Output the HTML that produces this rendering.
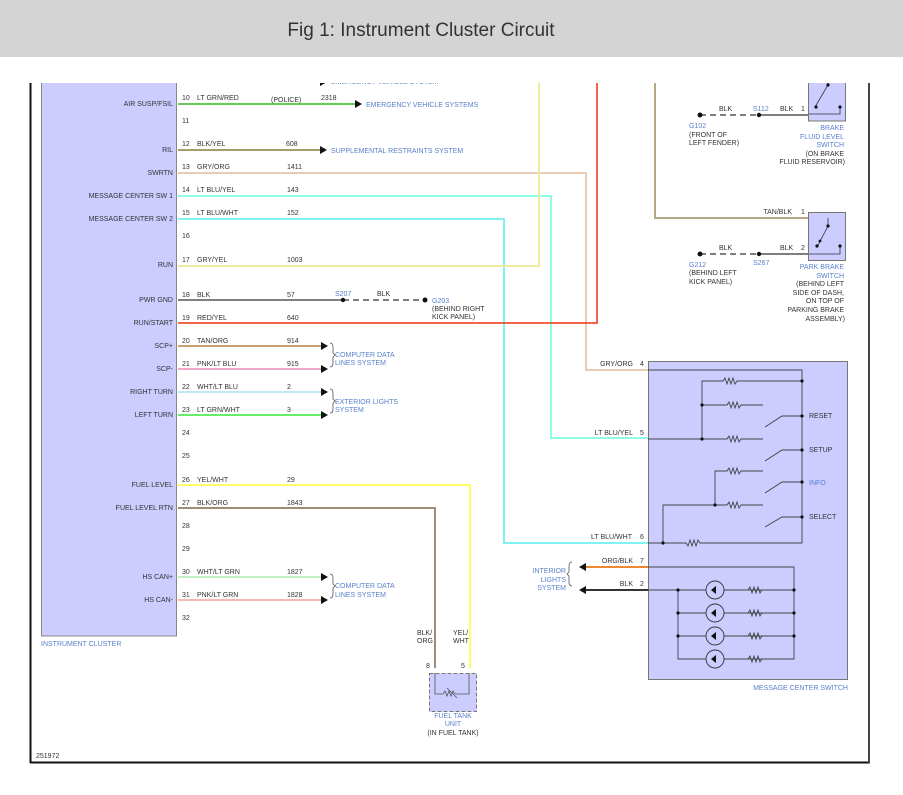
<!DOCTYPE html>
<html><head><meta charset="utf-8"><style>
body{margin:0;background:#fff;width:903px;height:795px;overflow:hidden}
svg{display:block}
text{font-family:"Liberation Sans",sans-serif;font-size:7px;fill:#333}
.b{fill:#5a7fcc}
</style></head><body>
<svg width="903" height="795" viewBox="0 0 903 795">
<line x1="30.5" y1="83" x2="30.5" y2="763" stroke="#111" stroke-width="2"/>
<line x1="30" y1="762.5" x2="870" y2="762.5" stroke="#111" stroke-width="2"/>
<line x1="869" y1="83" x2="869" y2="763" stroke="#444" stroke-width="2"/>
<rect x="41.5" y="60" width="135" height="576" fill="#ccccff" stroke="#888"/>
<text class="b" x="41" y="646">INSTRUMENT CLUSTER</text>
<text x="36" y="758">251972</text>
<g fill="none" stroke-width="1.5">
<line x1="178" y1="104" x2="356" y2="104" stroke="#66cc55" stroke-width="2"/>
<line x1="178" y1="150" x2="320" y2="150" stroke="#a39e6a" stroke-width="2"/>
<polyline points="178,173 586,173 586,370 648,370" stroke="#e8cbb4" stroke-width="2"/>
<polyline points="178,196 551,196 551,438 648,438" stroke="#66ffdd" stroke-width="1.5"/>
<polyline points="178,219 504,219 504,543 648,543" stroke="#55eeee" stroke-width="1.5"/>
<polyline points="178,266 539,266 539,70" stroke="#eeeaa0" stroke-width="2"/>
<line x1="178" y1="300" x2="343" y2="300" stroke="#555"/>
<line x1="343" y1="300" x2="425" y2="300" stroke="#555" stroke-dasharray="6,4"/>
<polyline points="178,323 597,323 597,70" stroke="#ee3311" stroke-width="1.5"/>
<line x1="178" y1="346" x2="322" y2="346" stroke="#c9a070" stroke-width="2"/>
<line x1="178" y1="369" x2="322" y2="369" stroke="#f0a8c8" stroke-width="2"/>
<line x1="178" y1="392" x2="322" y2="392" stroke="#c0e8ee" stroke-width="2"/>
<line x1="178" y1="415" x2="322" y2="415" stroke="#66ee66" stroke-width="2"/>
<polyline points="178,485 470,485 470,668" stroke="#ffff33" stroke-width="1.5"/>
<polyline points="178,508 435,508 435,668" stroke="#a08a78" stroke-width="2"/>
<line x1="178" y1="577" x2="322" y2="577" stroke="#aaeeaa" stroke-width="1.5"/>
<line x1="178" y1="600" x2="322" y2="600" stroke="#f8b8b8" stroke-width="2"/>
<polyline points="655,70 655,218 808,218" stroke="#b8a888" stroke-width="2"/>
<line x1="700" y1="115" x2="759" y2="115" stroke="#555" stroke-dasharray="6,4"/>
<line x1="759" y1="115" x2="808" y2="115" stroke="#555"/>
<line x1="700" y1="254" x2="759" y2="254" stroke="#555" stroke-dasharray="6,4"/>
<line x1="759" y1="254" x2="808" y2="254" stroke="#555"/>
<line x1="585" y1="567" x2="648" y2="567" stroke="#ee8833" stroke-width="2"/>
<line x1="585" y1="590" x2="648" y2="590" stroke="#333" stroke-width="2"/>
</g>
<g fill="#111">
<polygon points="320,78 327,82 320,86"/>
<polygon points="355,100 362,104 355,108"/><polygon points="320,146 327,150 320,154"/>
<polygon points="321,342 328,346 321,350"/><polygon points="321,365 328,369 321,373"/>
<polygon points="321,388 328,392 321,396"/><polygon points="321,411 328,415 321,419"/>
<polygon points="321,573 328,577 321,581"/><polygon points="321,596 328,600 321,604"/>
<polygon points="586,563 579,567 586,571"/><polygon points="586,586 579,590 586,594"/>
<circle cx="343" cy="300" r="2.2"/><circle cx="425" cy="300" r="2.5"/>
<circle cx="759" cy="115" r="2.2"/><circle cx="700" cy="115" r="2.5"/>
<circle cx="759" cy="254" r="2.2"/><circle cx="700" cy="254" r="2.5"/>
</g>
<text class="b" x="331" y="84">EMERGENCY VEHICLE SYSTEM</text>
<g fill="none" stroke="#555" stroke-width="0.8">
<path d="M330,343 q3,0 3,4 v6 l2,2 l-2,2 v6 q0,4 -3,4"/>
<path d="M330,389 q3,0 3,4 v6 l2,2 l-2,2 v6 q0,4 -3,4"/>
<path d="M330,574 q3,0 3,4 v6 l2,2 l-2,2 v6 q0,4 -3,4"/>
<path d="M572,562 q-3,0 -3,4 v6 l-2,2 l2,2 v6 q0,4 3,4"/>
</g>
<g text-anchor="end">
<text x="173" y="106">AIR SUSP/FSIL</text><text x="173" y="152">RIL</text><text x="173" y="175">SWRTN</text>
<text x="173" y="198">MESSAGE CENTER SW 1</text><text x="173" y="221">MESSAGE CENTER SW 2</text>
<text x="173" y="267">RUN</text><text x="173" y="302">PWR GND</text><text x="173" y="325">RUN/START</text>
<text x="173" y="348">SCP+</text><text x="173" y="371">SCP-</text><text x="173" y="394">RIGHT TURN</text>
<text x="173" y="417">LEFT TURN</text><text x="173" y="487">FUEL LEVEL</text><text x="173" y="510">FUEL LEVEL RTN</text>
<text x="173" y="579">HS CAN+</text><text x="173" y="602">HS CAN-</text>
</g>
<g>
<text x="182" y="100">10</text><text x="182" y="123">11</text><text x="182" y="146">12</text><text x="182" y="169">13</text>
<text x="182" y="192">14</text><text x="182" y="215">15</text><text x="182" y="238">16</text><text x="182" y="262">17</text>
<text x="182" y="297">18</text><text x="182" y="320">19</text><text x="182" y="343">20</text><text x="182" y="366">21</text>
<text x="182" y="389">22</text><text x="182" y="412">23</text><text x="182" y="435">24</text><text x="182" y="458">25</text>
<text x="182" y="482">26</text><text x="182" y="505">27</text><text x="182" y="528">28</text><text x="182" y="551">29</text>
<text x="182" y="574">30</text><text x="182" y="597">31</text><text x="182" y="620">32</text>
<text x="197" y="100">LT GRN/RED</text><text x="197" y="146">BLK/YEL</text><text x="197" y="169">GRY/ORG</text>
<text x="197" y="192">LT BLU/YEL</text><text x="197" y="215">LT BLU/WHT</text><text x="197" y="262">GRY/YEL</text>
<text x="197" y="297">BLK</text><text x="197" y="320">RED/YEL</text><text x="197" y="343">TAN/ORG</text>
<text x="197" y="366">PNK/LT BLU</text><text x="197" y="389">WHT/LT BLU</text><text x="197" y="412">LT GRN/WHT</text>
<text x="197" y="482">YEL/WHT</text><text x="197" y="505">BLK/ORG</text><text x="197" y="574">WHT/LT GRN</text><text x="197" y="597">PNK/LT GRN</text>
<text x="271" y="102">(POLICE)</text><text x="321" y="100">2318</text><text x="286" y="146">608</text><text x="287" y="169">1411</text>
<text x="287" y="192">143</text><text x="287" y="215">152</text><text x="287" y="262">1003</text><text x="287" y="297">57</text>
<text x="287" y="320">640</text><text x="287" y="343">914</text><text x="287" y="366">915</text><text x="287" y="389">2</text>
<text x="287" y="412">3</text><text x="287" y="482">29</text><text x="287" y="505">1843</text><text x="287" y="574">1827</text><text x="287" y="597">1828</text>
<text x="335" y="296" class="b">S207</text><text x="377" y="296">BLK</text>
<text class="b" x="432" y="303">G203</text><text x="432" y="311">(BEHIND RIGHT</text><text x="432" y="319">KICK PANEL)</text>
<text class="b" x="366" y="107">EMERGENCY VEHICLE SYSTEMS</text>
<text class="b" x="331" y="153">SUPPLEMENTAL RESTRAINTS SYSTEM</text>
<text class="b" x="335" y="357">COMPUTER DATA</text><text class="b" x="335" y="365">LINES SYSTEM</text>
<text class="b" x="335" y="404">EXTERIOR LIGHTS</text><text class="b" x="335" y="412">SYSTEM</text>
<text class="b" x="335" y="588">COMPUTER DATA</text><text class="b" x="335" y="597">LINES SYSTEM</text>
</g>
<rect x="429.5" y="673.5" width="47" height="38" fill="#ccccff" stroke="#777" stroke-dasharray="4,2"/>
<path d="M435,673 v21 h8 l2,-3 l2,5 l2,-5 l2,5 l2,-5 l2,3 h14 v-21 M447,688 l10,10" fill="none" stroke="#555" stroke-width="0.8"/>
<text x="417" y="635">BLK/</text><text x="417" y="643">ORG</text><text x="453" y="635">YEL/</text><text x="453" y="643">WHT</text>
<text x="426" y="668">8</text><text x="461" y="668">5</text>
<g text-anchor="middle"><text class="b" x="453" y="718">FUEL TANK</text><text class="b" x="453" y="726">UNIT</text><text x="453" y="735">(IN FUEL TANK)</text></g>
<rect x="808.5" y="60" width="37" height="61" fill="#ccccff" stroke="#777"/>
<rect x="808.5" y="212.5" width="37" height="48" fill="#ccccff" stroke="#777"/>
<g fill="none" stroke="#333" stroke-width="0.8">
<path d="M815,107 L828,85 V70 M840,107 v7 h-31"/>
<path d="M817,247 L828,226 v-8 M840,246 v8 h-31"/>
</g>
<g fill="#111"><circle cx="816" cy="107" r="1.6"/><circle cx="840" cy="107" r="1.6"/><circle cx="828" cy="85" r="1.6"/><circle cx="828" cy="226" r="1.6"/><circle cx="817" cy="246" r="1.6"/><circle cx="840" cy="246" r="1.6"/><circle cx="820" cy="241" r="1.4"/></g>
<text x="719" y="111">BLK</text><text class="b" x="753" y="111">S112</text><text x="780" y="111">BLK</text><text x="801" y="111">1</text>
<text class="b" x="689" y="128">G102</text><text x="689" y="137">(FRONT OF</text><text x="689" y="145">LEFT FENDER)</text>
<g text-anchor="end"><text class="b" x="844" y="130">BRAKE</text><text class="b" x="844" y="139">FLUID LEVEL</text><text class="b" x="844" y="147">SWITCH</text><text x="844" y="156">(ON BRAKE</text><text x="845" y="164">FLUID RESERVOIR)</text>
<text x="792" y="214">TAN/BLK</text>
<text class="b" x="844" y="269">PARK BRAKE</text><text class="b" x="844" y="278">SWITCH</text><text x="844" y="286">(BEHIND LEFT</text><text x="844" y="295">SIDE OF DASH,</text><text x="844" y="303">ON TOP OF</text><text x="844" y="312">PARKING BRAKE</text><text x="845" y="321">ASSEMBLY)</text></g>
<text x="801" y="214">1</text><text x="719" y="250">BLK</text><text x="780" y="250">BLK</text><text x="801" y="250">2</text>
<text class="b" x="753" y="265">S267</text><text class="b" x="689" y="267">G212</text><text x="689" y="275">(BEHIND LEFT</text><text x="689" y="284">KICK PANEL)</text>
<rect x="648.5" y="361.5" width="199" height="318" fill="#ccccff" stroke="#777"/>
<g fill="none" stroke="#444" stroke-width="0.9">
<path d="M648,370 H802 V543 H700 l-2,-3 l-2,6 l-2,-6 l-2,6 l-2,-6 l-2,6 l-2,-3 H648"/>
<path d="M702,439 V381 H723 l2,-3 l2,6 l2,-6 l2,6 l2,-6 l2,6 l2,-3 H802"/>
<path d="M702,405 H727 l2,-3 l2,6 l2,-6 l2,6 l2,-6 l2,6 l2,-3 H763"/>
<path d="M648,439 H727 l2,-3 l2,6 l2,-6 l2,6 l2,-6 l2,6 l2,-3 H763"/>
<path d="M663,543 V505 H727 l2,-3 l2,6 l2,-6 l2,6 l2,-6 l2,6 l2,-3 H763"/>
<path d="M715,505 V471 H727 l2,-3 l2,6 l2,-6 l2,6 l2,-6 l2,6 l2,-3 H763"/>
<path d="M802,416 H782 L765,427 M802,450 H782 L765,461 M802,482 H782 L765,493 M802,517 H782 L765,527"/>
<path d="M648,567 H794 V659 H678 V590 M648,590 H794 M678,613 H794 M678,636 H794"/>
<path d="M748,590 l2,-3 l2,6 l2,-6 l2,6 l2,-6 l2,6 l2,-3 M748,613 l2,-3 l2,6 l2,-6 l2,6 l2,-6 l2,6 l2,-3 M748,636 l2,-3 l2,6 l2,-6 l2,6 l2,-6 l2,6 l2,-3 M748,659 l2,-3 l2,6 l2,-6 l2,6 l2,-6 l2,6 l2,-3"/>
</g>
<g fill="#ccccff" stroke="#333" stroke-width="0.9">
<circle cx="715" cy="590" r="9"/><circle cx="715" cy="613" r="9"/><circle cx="715" cy="636" r="9"/><circle cx="715" cy="659" r="9"/>
</g>
<g fill="#111">
<polygon points="711,590 716,586 716,594"/><polygon points="711,613 716,609 716,617"/><polygon points="711,636 716,632 716,640"/><polygon points="711,659 716,655 716,663"/>
<circle cx="802" cy="381" r="1.6"/><circle cx="702" cy="405" r="1.6"/><circle cx="702" cy="439" r="1.6"/><circle cx="715" cy="505" r="1.6"/><circle cx="663" cy="543" r="1.6"/>
<circle cx="802" cy="416" r="1.6"/><circle cx="802" cy="450" r="1.6"/><circle cx="802" cy="482" r="1.6"/><circle cx="802" cy="517" r="1.6"/>
<circle cx="678" cy="590" r="1.6"/><circle cx="678" cy="613" r="1.6"/><circle cx="678" cy="636" r="1.6"/><circle cx="794" cy="590" r="1.6"/><circle cx="794" cy="613" r="1.6"/><circle cx="794" cy="636" r="1.6"/>
</g>
<text x="809" y="418">RESET</text><text x="809" y="452">SETUP</text><text class="b" x="809" y="485">INFO</text><text x="809" y="519">SELECT</text>
<g text-anchor="end">
<text x="633" y="366">GRY/ORG</text><text x="633" y="435">LT BLU/YEL</text><text x="632" y="539">LT BLU/WHT</text><text x="633" y="563">ORG/BLK</text><text x="633" y="586">BLK</text>
<text class="b" x="566" y="573">INTERIOR</text><text class="b" x="566" y="582">LIGHTS</text><text class="b" x="566" y="590">SYSTEM</text>
<text class="b" x="848" y="690">MESSAGE CENTER SWITCH</text>
</g>
<text x="640" y="366">4</text><text x="640" y="435">5</text><text x="640" y="539">6</text><text x="640" y="563">7</text><text x="640" y="586">2</text>
<rect x="0" y="0" width="903" height="83" fill="#fff"/>
<rect x="0" y="0" width="903" height="57" fill="#d4d4d4"/>
<text x="421" y="36" text-anchor="middle" style="font-size:19px;fill:#333">Fig 1: Instrument Cluster Circuit</text>
</svg>
</body></html>
